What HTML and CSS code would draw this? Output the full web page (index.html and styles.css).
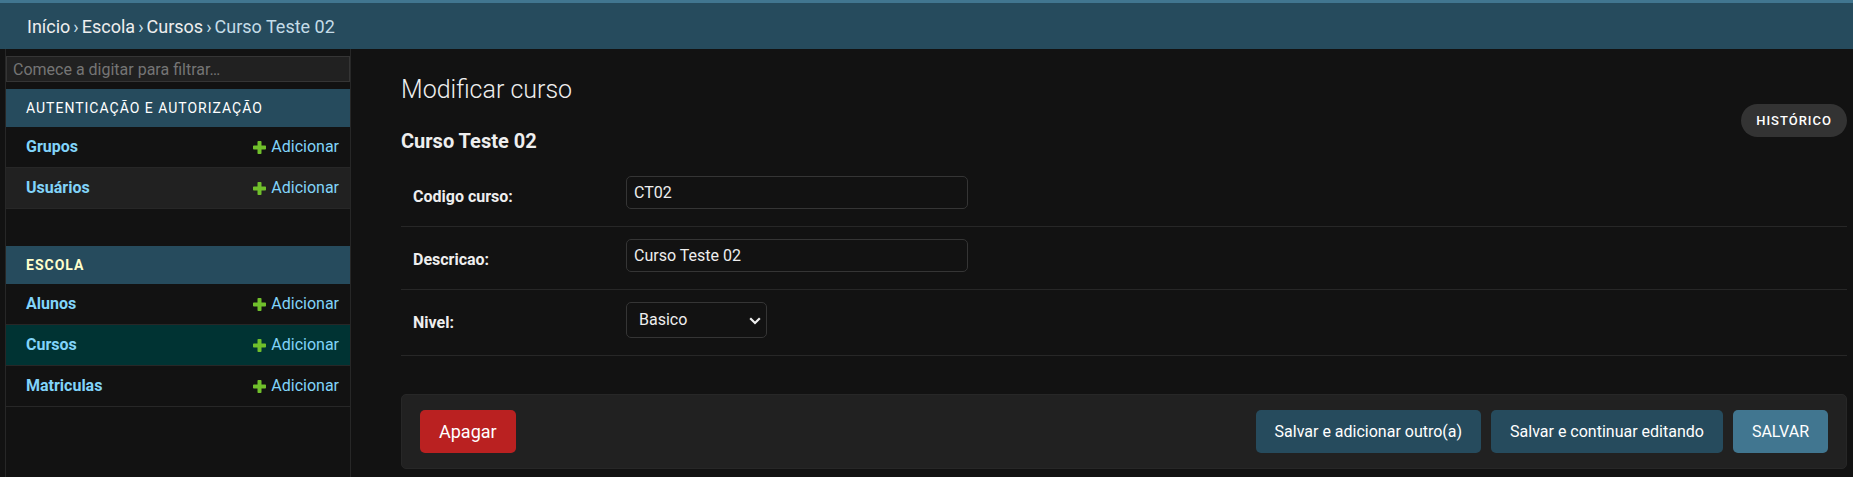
FILE: index.html
```html
<!DOCTYPE html>
<html lang="pt-br">
<head>
<meta charset="utf-8">
<title>Curso Teste 02 | Modificar curso</title>
<link rel="stylesheet" href="styles.css">
</head>
<body>
<svg class="sprite" aria-hidden="true">
  <symbol id="plus" viewBox="0 0 13 13"><path d="M5.3 0h2.4q.8 0 .8.8v3.7h3.7q.8 0 .8.8v2.4q0 .8-.8.8H8.500v3.700q0 .8-.8.8H5.300q-.8 0-.8-.8V8.500H.8q-.8 0-.8-.8V5.300q0-.8.8-.8h3.700V.8q0-.8.8-.8z"/></symbol>
</svg>
<nav class="breadcrumbs" aria-label="Breadcrumbs"><a href="#">Início</a><span>›</span><a href="#">Escola</a><span>›</span><a href="#">Cursos</a><span>›</span><span>Curso Teste 02</span></nav>
<div class="main">
  <nav class="sidebar" aria-label="Sidebar">
    <input class="filter" type="search" placeholder="Comece a digitar para filtrar…" aria-label="Filtrar itens de navegação">
    <table class="module">
      <caption class="caption"><a href="#">Autenticação e Autorização</a></caption>
      <tr><th scope="row"><a href="#">Grupos</a></th><td><a class="add" href="#"><svg class="plus"><use href="#plus"/></svg>Adicionar</a></td></tr>
      <tr class="alt"><th scope="row"><a href="#">Usuários</a></th><td><a class="add" href="#"><svg class="plus"><use href="#plus"/></svg>Adicionar</a></td></tr>
    </table>
    <table class="module">
      <caption class="caption current"><a href="#">Escola</a></caption>
      <tr><th scope="row"><a href="#">Alunos</a></th><td><a class="add" href="#"><svg class="plus"><use href="#plus"/></svg>Adicionar</a></td></tr>
      <tr class="selected"><th scope="row"><a href="#">Cursos</a></th><td><a class="add" href="#"><svg class="plus"><use href="#plus"/></svg>Adicionar</a></td></tr>
      <tr><th scope="row"><a href="#">Matriculas</a></th><td><a class="add" href="#"><svg class="plus"><use href="#plus"/></svg>Adicionar</a></td></tr>
    </table>
  </nav>
  <main class="content">
    <header class="heading">
      <div>
        <h1 class="title">Modificar curso</h1>
        <h2 class="subtitle">Curso Teste 02</h2>
      </div>
      <a class="history" href="#">Histórico</a>
    </header>
    <form class="form">
      <div class="row"><label for="codigo">Codigo curso:</label><input class="text" id="codigo" type="text" value="CT02"></div>
      <div class="row"><label for="descricao">Descricao:</label><input class="text" id="descricao" type="text" value="Curso Teste 02"></div>
      <div class="row"><label for="nivel">Nivel:</label><div class="picker"><select class="select" id="nivel"><option>Basico</option></select><svg class="chevron" viewBox="0 0 12 8" aria-hidden="true"><path d="M1.200 1.200 6 6l4.800-4.800"/></svg></div></div>
      <div class="submit-row">
        <a class="button delete" href="#">Apagar</a>
        <button class="button" type="button">Salvar e adicionar outro(a)</button>
        <button class="button" type="button">Salvar e continuar editando</button>
        <button class="button default" type="submit">SALVAR</button>
      </div>
    </form>
  </main>
</div>
</body>
</html>
```
FILE: styles.css
```css
* { box-sizing: border-box; }

body {
  margin: 0;
  min-height: 100vh;
  display: flex;
  flex-direction: column;
  background: #121212;
  color: #eee;
  font: 16px/20px Roboto, "Liberation Sans", sans-serif;
}

a { color: #81d4fa; text-decoration: none; }
input, select, button { font: inherit; color: inherit; }

.sprite { display: none; }

.breadcrumbs {
  display: flex;
  gap: 3px;
  padding: 12px 27px 11px;
  border-top: 3px solid #417690;
  background: #264b5d;
  color: #c4dce8;
  font-size: 18px;
  line-height: 23px;
}
.breadcrumbs a { color: #eee; }

.main { flex: 1; display: flex; }

.sidebar {
  flex: none;
  width: 346px;
  margin-left: 5px;
  padding-top: 7px;
  border: solid #272727;
  border-width: 0 1px;
}

.filter {
  display: block;
  width: 100%;
  height: 26px;
  margin-bottom: 7px;
  padding: 0 6px;
  border: 1px solid #353535;
  background: #212121;
  appearance: none;
}
.filter::placeholder { color: #757575; }

.module {
  width: 100%;
  margin-bottom: 37px;
  border-collapse: separate;
  border-spacing: 0;
}
.caption {
  height: 38px;
  padding: 9px 20px;
  background: #264b5d;
  font-size: 14px;
  letter-spacing: 1px;
  text-align: left;
  text-transform: uppercase;
}
.caption a { color: #fff; }
.caption.current { font-weight: bold; }
.caption.current a { color: #ffc; }
.module th,
.module td {
  height: 41px;
  padding: 0;
  border-bottom: 1px solid #272727;
}
.module th { padding-left: 20px; text-align: left; }
.module td { padding-right: 11px; }
.alt { background: #212121; }
.selected { background: #033; }
.add {
  display: flex;
  justify-content: flex-end;
  align-items: center;
  gap: 5px;
}
.plus { width: 13px; height: 13px; fill: #70bf2b; }

.content { flex: 1; padding: 26px 6px 8px 50px; }

.heading { display: flex; justify-content: space-between; }
.title {
  margin: 0 0 22px;
  color: #eee;
  font-size: 25px;
  line-height: 30px;
  font-weight: 300;
}
.subtitle { margin: 0 0 20px; font-size: 20px; line-height: 29px; }
.history {
  height: 33px;
  margin-top: 29px;
  padding: 0 15px;
  border-radius: 17px;
  background: #333;
  color: #fff;
  font-size: 13px;
  line-height: 33px;
  font-weight: 500;
  letter-spacing: 1px;
  text-transform: uppercase;
}

.row {
  display: flex;
  align-items: flex-start;
  padding: 0 12px 17px;
  margin-bottom: 12px;
  border-bottom: 1px solid #272727;
}
.row label { width: 213px; padding-top: 11px; font-weight: bold; }
.text, .select {
  display: block;
  width: 342px;
  height: 33px;
  padding: 0 7px;
  border: 1px solid #353535;
  border-radius: 5px;
  background: #121212;
}
.picker { position: relative; }
.select { width: 141px; height: 36px; padding: 0 12px; appearance: none; }
.chevron {
  position: absolute;
  top: 15px;
  right: 6px;
  width: 12px;
  height: 8px;
  fill: none;
  stroke: #eee;
  stroke-width: 2.2;
  pointer-events: none;
}

.submit-row {
  display: flex;
  gap: 10px;
  margin-top: 38px;
  padding: 15px 18px;
  border: 1px solid #272727;
  border-radius: 5px;
  background: #212121;
}
.button {
  height: 43px;
  padding: 0 19px;
  border: 0;
  border-radius: 5px;
  background: #264b5d;
  color: #fff;
  line-height: 43px;
}
.default { background: #417690; }
.delete { margin-right: auto; background: #ba2121; font-size: 18px; }
```
